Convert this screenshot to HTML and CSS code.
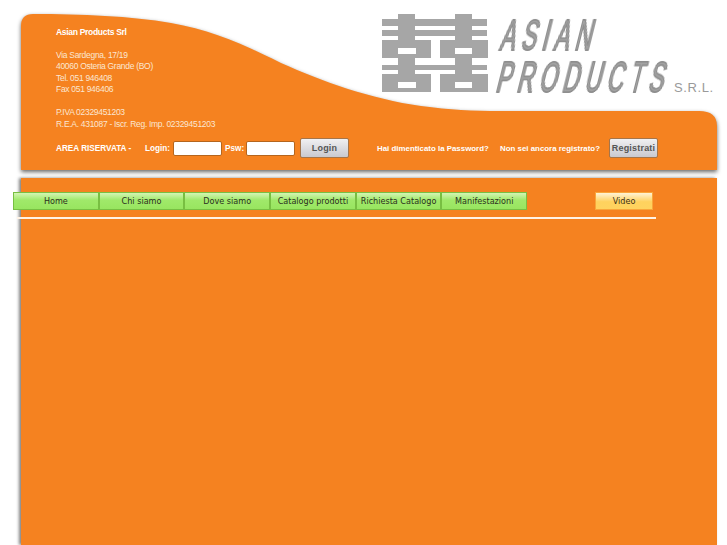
FILE: index.html
```html
<!DOCTYPE html>
<html lang="en">
<head>
    <meta charset="UTF-8">
    <meta name="viewport" content="width=device-width, initial-scale=1.0">
    <title>Asian Products Srl</title>
    <link rel="stylesheet" href="styles.css">
</head>
<body>
    <div class="page">
        <header class="header">
            <svg class="header-shape" width="696" height="156" viewBox="0 0 696 156">
                <path d="M0 12 Q0 0 12 0 C60 0 110 2 150 9 C190 16 220 29 260 49 C300 67 350 85 400 92 C430 96 450 97 480 97 L678 97 Q696 97 696 112 L696 156 L0 156 Z" fill="#f58220"/>
            </svg>

            <div class="header-top">
                <div class="address">
                    <p class="company">Asian Products Srl</p>
                    <p>Via Sardegna, 17/19<br>40060 Osteria Grande (BO)<br>Tel. 051 946408<br>Fax 051 946406</p>
                    <p>P.IVA 02329451203<br>R.E.A. 431087 - Iscr. Reg. Imp. 02329451203</p>
                </div>
                <svg class="logo" width="337" height="90" viewBox="380 10 337 90">
                    <path class="logo-mark" fill-rule="evenodd" d="M398 14H415V19H455V14H472V19H487V26H472V30H487V36H472V40H488V58H472V65H487V70H472V74H488V92H440V74H455V70H415V74H431V92H382V74H398V70H382V65H398V58H382V40H398V36H382V30H398V26H382V19H398ZM415 26V30H455V26ZM415 36V40H431V58H415V65H455V58H440V40H455V36ZM398 48V54H416V48ZM455 48V54H472V48ZM398 82V88H416V82ZM455 82V88H472V82Z"/>
                    <text class="logo-name" transform="translate(499 50) skewX(-14) scale(0.52 1)" letter-spacing="11.5">ASIAN</text>
                    <text class="logo-name" transform="translate(495 92) skewX(-14) scale(0.52 1)" letter-spacing="11.5">PRODUCTS</text>
                    <text class="logo-srl" x="674" y="92">S.R.L.</text>
                </svg>
            </div>

            <form class="login-row">
                <span class="area">AREA RISERVATA -</span>
                <label class="login-label">Login:</label>
                <input class="field" type="text">
                <label class="psw-label">Psw:</label>
                <input class="field" type="password">
                <button class="btn" type="button">Login</button>
                <a class="link forgot">Hai dimenticato la Password?</a>
                <a class="link signup">Non sei ancora registrato?</a>
                <button class="btn" type="button">Registrati</button>
            </form>
        </header>

        <main class="panel">
            <nav class="nav">
                <a class="nav-item">Home</a>
                <a class="nav-item">Chi siamo</a>
                <a class="nav-item">Dove siamo</a>
                <a class="nav-item">Catalogo prodotti</a>
                <a class="nav-item">Richiesta Catalogo</a>
                <a class="nav-item">Manifestazioni</a>
                <a class="nav-item nav-video">Video</a>
            </nav>
            <div class="nav-rule"></div>
        </main>
    </div>
</body>
</html>
```

FILE: styles.css
```css
/* Global Styles */
body {
    margin: 0;
    background: #fff;
    font-family: "Liberation Sans", Arial, sans-serif;
    overflow: hidden;
}

.page {
    width: 696px;
    margin-left: 21px;
    padding-top: 14px;
}

/* Header */
.header {
    position: relative;
    height: 156px;
    color: #fbe6d2;
    font-size: 8.5px;
}

.header-shape {
    position: absolute;
    top: 0;
    left: 0;
    overflow: visible;
    filter: drop-shadow(0 2px 2px rgba(0, 0, 0, 0.6));
}

.header-top {
    position: relative;
    display: flex;
    justify-content: space-between;
    height: 122px;
}

.address {
    padding: 13px 0 0 35px;
    line-height: 11.4px;
    letter-spacing: -0.3px;
}

.address p {
    margin: 0 0 11.6px;
}

.company,
.area,
.login-row label,
.link {
    font-weight: bold;
    color: #fff;
}

.area,
.login-row label {
    font-size: 8.2px;
}

.link {
    font-size: 7.9px;
}

/* Logo */
.logo {
    margin: -4px 0 0;
}

.logo-mark {
    fill: #a6a6a6;
    filter: drop-shadow(0.7px 0.7px 0 #6f6f6f);
}

.logo-name {
    font-family: "Liberation Sans", Arial, sans-serif;
    font-size: 43px;
    fill: #a3a3a3;
    stroke: #8f8f8f;
    stroke-width: 1.6;
    filter: drop-shadow(0.6px 0.8px 0 #666);
}

.logo-srl {
    font-family: "Liberation Sans", Arial, sans-serif;
    font-size: 13px;
    letter-spacing: 0.6px;
    fill: #9a9a9a;
}

/* Login row */
.login-row {
    position: relative;
    display: flex;
    align-items: center;
    height: 20px;
    padding: 2px 0 0 35px;
    white-space: nowrap;
}

.login-row > * {
    flex: none;
}

.area {
    width: 89px;
}

.login-label {
    width: 28px;
}

.psw-label {
    width: 21px;
    margin-left: 3px;
}

.field {
    box-sizing: border-box;
    width: 49px;
    height: 15px;
    padding: 0;
    background: #fff;
    border: 1px solid #b5651d;
    border-radius: 2px;
}

.btn {
    box-sizing: border-box;
    width: 49px;
    height: 20px;
    margin-left: 5px;
    padding: 0;
    background: linear-gradient(#f0f0f2, #c9c9cf);
    border: 1px solid #a5754a;
    border-radius: 2px;
    font-family: "Liberation Sans", Arial, sans-serif;
    font-size: 9px;
    font-weight: bold;
    letter-spacing: 0.2px;
    color: #555;
}

.forgot {
    width: 123px;
    margin-left: 28px;
}

.signup {
    width: 104px;
}

/* Main panel */
.panel {
    box-sizing: border-box;
    height: 367px;
    margin-top: 8px;
    padding-top: 14px;
    background: #f58220;
    box-shadow: -2px 0 3px rgba(0, 0, 0, 0.5);
}

/* Navigation */
.nav {
    display: flex;
    width: 640px;
    margin-left: -8px;
}

.nav-item {
    box-sizing: border-box;
    width: 85.7px;
    height: 18px;
    background: linear-gradient(#d4f5b4, #a0e96a 45%, #98e560);
    border: 1px solid #78bf42;
    font-family: "DejaVu Sans", Verdana, sans-serif;
    font-size: 8.1px;
    line-height: 16px;
    text-align: center;
    white-space: nowrap;
    color: #2a2f20;
}

.nav-video {
    width: 58px;
    margin-left: auto;
    background: linear-gradient(#fff3d6, #ffd25e 55%, #ffd35f);
    border-color: #f9a63a;
    color: #3a3016;
}

.nav-rule {
    width: 639px;
    height: 2px;
    margin: 7px 0 0 -4px;
    background: #fff3e6;
}
```
